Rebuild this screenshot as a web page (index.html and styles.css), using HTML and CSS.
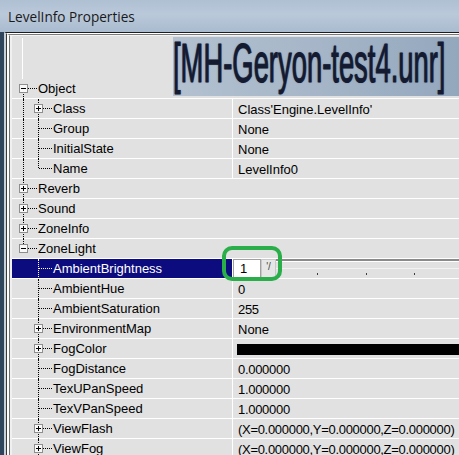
FILE: index.html
```html
<!DOCTYPE html>
<html>
<head>
<meta charset="utf-8">
<title>LevelInfo Properties</title>
<link rel="stylesheet" href="styles.css">
</head>
<body>
<div class="window">
  <div class="titlebar"><span class="title">LevelInfo Properties</span></div>
  <div class="frame-a"><div class="frame-b"><div class="frame-c"><div class="frame-d"><div class="frame-e">
    <div class="panel">
      <div class="banner"><span class="banner-text">[MH-Geryon-test4.unr]</span></div>
      <div class="header"><span class="topline"></span></div>
      <div class="rows">
        <div class="row cat"><div class="name"><span class="g f"><span class="box minus"></span></span><span class="label">Object</span></div></div>
        <div class="row"><div class="name"><span class="g v"></span><span class="g t"><span class="box plus"></span></span><span class="label">Class</span></div><div class="value">Class'Engine.LevelInfo'</div></div>
        <div class="row"><div class="name"><span class="g v"></span><span class="g t"></span><span class="label">Group</span></div><div class="value">None</div></div>
        <div class="row"><div class="name"><span class="g v"></span><span class="g t"></span><span class="label">InitialState</span></div><div class="value">None</div></div>
        <div class="row"><div class="name"><span class="g v"></span><span class="g l"></span><span class="label">Name</span></div><div class="value">LevelInfo0</div></div>
        <div class="row cat"><div class="name"><span class="g t"><span class="box plus"></span></span><span class="label">Reverb</span></div></div>
        <div class="row cat"><div class="name"><span class="g t"><span class="box plus"></span></span><span class="label">Sound</span></div></div>
        <div class="row cat"><div class="name"><span class="g t"><span class="box plus"></span></span><span class="label">ZoneInfo</span></div></div>
        <div class="row cat"><div class="name"><span class="g l"><span class="box minus"></span></span><span class="label">ZoneLight</span></div></div>
        <div class="row sel"><div class="name"><span class="g"></span><span class="g t"></span><span class="label">AmbientBrightness</span></div>
          <div class="value editor">
            <span class="edit">1</span>
            <span class="spin">'/</span>
            <span class="slider"></span>
          </div>
        </div>
        <div class="row"><div class="name"><span class="g"></span><span class="g t"></span><span class="label">AmbientHue</span></div><div class="value num">0</div></div>
        <div class="row"><div class="name"><span class="g"></span><span class="g t"></span><span class="label">AmbientSaturation</span></div><div class="value num">255</div></div>
        <div class="row"><div class="name"><span class="g"></span><span class="g t"><span class="box plus"></span></span><span class="label">EnvironmentMap</span></div><div class="value">None</div></div>
        <div class="row"><div class="name"><span class="g"></span><span class="g t"><span class="box plus"></span></span><span class="label">FogColor</span></div><div class="value"><span class="swatch"></span></div></div>
        <div class="row"><div class="name"><span class="g"></span><span class="g t"></span><span class="label">FogDistance</span></div><div class="value num">0.000000</div></div>
        <div class="row"><div class="name"><span class="g"></span><span class="g t"></span><span class="label">TexUPanSpeed</span></div><div class="value num">1.000000</div></div>
        <div class="row"><div class="name"><span class="g"></span><span class="g t"></span><span class="label">TexVPanSpeed</span></div><div class="value num">1.000000</div></div>
        <div class="row"><div class="name"><span class="g"></span><span class="g t"><span class="box plus"></span></span><span class="label">ViewFlash</span></div><div class="value num">(X=0.000000,Y=0.000000,Z=0.000000)</div></div>
        <div class="row"><div class="name"><span class="g"></span><span class="g t"><span class="box plus"></span></span><span class="label">ViewFog</span></div><div class="value num">(X=0.000000,Y=0.000000,Z=0.000000)</div></div>
      </div>
      <div class="annot"></div>
    </div>
  </div></div></div></div></div>
</div>
</body>
</html>
```
FILE: styles.css
```css
html, body {
  margin: 0;
  padding: 0;
  overflow: hidden;
  width: 459px;
  height: 455px;
  background: #2f455c;
}
.window {
  width: 459px;
  height: 455px;
  overflow: hidden;
  font-family: "Liberation Sans", Arial, sans-serif;
  font-size: 13px;
  color: #000;
}
.titlebar {
  height: 32px;
  display: flex;
  align-items: center;
  padding-left: 8px;
  background: linear-gradient(to bottom, #afc0d3 0%, #bac9da 45%, #a9bbcf 100%);
}
.title {
  font-family: "Open Sans", "Noto Sans", sans-serif;
  font-size: 13.6px;
  color: #1a1a1a;
  margin-top: 1px;
}
.frame-a {
  margin-left: 4px;
  border-top: 1px solid #1c1c1c;
  border-left: 2px solid #c8d0d8;
}
.frame-b {
  border-top: 1px solid #ffffff;
  border-left: 1px solid #3a3a3a;
}
.frame-c {
  border-top: 1px solid #7a7a7a;
  border-left: 2px solid #ffffff;
}
.frame-d {
  border-top: 1px solid #f4f4f4;
  border-left: 1px solid #6e6e6e;
}
.frame-e {
  border-left: 2px solid #f0f0f0;
  height: 430px;
  background: #e1e1e1;
}
.panel {
  position: relative;
  height: 100%;
  background: #e1e1e1;
}
.banner {
  position: absolute;
  left: 161px;
  top: 1px;
  right: 0;
  height: 59px;
  background: linear-gradient(to right, #b3c1d0 0%, #a6b6c8 50%, #93a7bd 100%);
  z-index: 2;
}
.banner-text {
  display: block;
  font-family: "Liberation Sans", Arial, sans-serif;
  font-size: 27.4px;
  line-height: 26px;
  color: #141a30;
  white-space: nowrap;
  -webkit-text-stroke: 0.5px #141a30;
  text-shadow: 0 0 1px #3b4b70;
  transform: scaleY(2.05);
  transform-origin: 0 0;
}
.header {
  height: 43px;
  position: relative;
}
.topline {
  position: absolute;
  left: 10px;
  top: 2px;
  width: 1px;
  height: 41px;
  background: #ffffff;
}
.row {
  display: flex;
  height: 20px;
}
.name {
  width: 220px;
  height: 20px;
  display: flex;
  align-items: center;
  padding-left: 4px;
  box-sizing: border-box;
  box-shadow: inset 0 -1px 0 #ffffff;
}
.row.cat .name {
  width: 100%;
}
.value {
  flex: 1;
  height: 20px;
  display: flex;
  align-items: center;
  padding-left: 5px;
  border-left: 1px solid #ffffff;
  box-shadow: inset 0 -1px 0 #ffffff;
  white-space: nowrap;
  overflow: hidden;
}
.value.num {
  letter-spacing: -0.3px;
}
.label {
  margin-left: 7px;
  white-space: nowrap;
  padding-bottom: 1px;
}
.g {
  position: relative;
  width: 15px;
  height: 20px;
  flex: none;
}
.g.v::before, .g.t::before, .g.l::before, .g.f::before {
  content: "";
  position: absolute;
  left: 7px;
  top: 0;
  bottom: 0;
  border-left: 1px dotted #000;
}
.g.l::before {
  bottom: 11px;
}
.g.f::before {
  top: 9px;
}
.g.t::after, .g.l::after, .g.f::after {
  content: "";
  position: absolute;
  left: 8px;
  top: 9px;
  width: 13px;
  border-top: 1px dotted #000;
}
.box {
  position: absolute;
  left: 3px;
  top: 5px;
  width: 9px;
  height: 9px;
  box-sizing: border-box;
  border: 1px solid #8e8e8e;
  background: #f8f8f8;
  z-index: 1;
}
.box::before {
  content: "";
  position: absolute;
  left: 1px;
  top: 3px;
  width: 5px;
  height: 1px;
  background: #000;
}
.box.plus::after {
  content: "";
  position: absolute;
  left: 3px;
  top: 1px;
  width: 1px;
  height: 5px;
  background: #000;
}
.row.sel .name {
  background: #0c0c7e;
  color: #ffffff;
}
.row.sel .g::before, .row.sel .g::after {
  border-color: #ffffff;
}
.value.editor {
  padding-left: 0;
  align-items: stretch;
}
.edit {
  width: 28px;
  height: 19px;
  box-sizing: border-box;
  border: 1px solid #a0a0a0;
  background: #ffffff;
  padding-left: 6px;
  line-height: 17px;
  flex: none;
}
.spin {
  width: 15px;
  height: 19px;
  box-sizing: border-box;
  border: 1px solid #c8c8c8;
  background: #e6e6e6;
  font-size: 10px;
  line-height: 14px;
  color: #444;
  text-align: center;
  flex: none;
}
.slider {
  flex: 1;
  height: 19px;
  box-sizing: border-box;
  border-top: 2px solid #8a8a8a;
  background-image:
    linear-gradient(#ffffff, #ffffff),
    linear-gradient(#f2f2f2, #f2f2f2),
    repeating-linear-gradient(to right, transparent 0 41px, #3c3c3c 41px 42px, transparent 42px 48.5px);
  background-size: 100% 1px, 100% 1px, 100% 2px;
  background-position: 0 0, 0 7px, 0 12px;
  background-repeat: no-repeat;
}
.swatch {
  flex: 1;
  height: 11px;
  margin-left: -1px;
  background: #000;
}
.annot {
  position: absolute;
  left: 210px;
  top: 210px;
  width: 60px;
  height: 35px;
  box-sizing: border-box;
  border: 4px solid #2aae4a;
  border-radius: 10px;
  z-index: 3;
}
```
